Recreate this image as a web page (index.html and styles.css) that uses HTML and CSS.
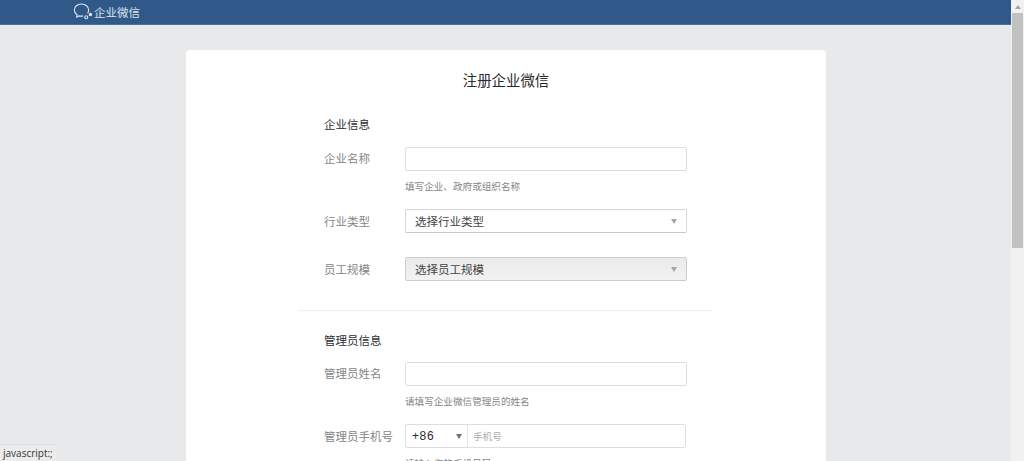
FILE: index.html
```html
<!DOCTYPE html>
<html lang="zh-CN">
<head>
<meta charset="utf-8">
<title>注册企业微信</title>
<link rel="stylesheet" href="styles.css">
</head>
<body>
<div class="app">
  <div class="page">
    <header class="topbar">
      <div class="brand">
        <svg class="logo" width="20" height="17" viewBox="0 0 20 17" fill="none" stroke="#dfe6ee" stroke-width="1.1">
          <path d="M14.6 10.4c.7-1 1.1-2.100 1.100-3.300C15.700 3.600 12.400 1 8.500 1S1.300 3.600 1.300 7.100c0 2 1.100 3.700 2.800 4.900l-.4 2.100 2.500-1.200c.6.100 1.200.2 1.800.2.700 0 1.400-.1 2-.2"/>
          <circle cx="13.200" cy="14.300" r="1.500"/>
          <circle cx="17.400" cy="11.600" r="1.200" fill="#dfe6ee"/>
        </svg>
        <span class="brand-name">企业微信</span>
      </div>
    </header>
    <main class="card">
      <h1 class="title">注册企业微信</h1>
      <div class="form">
        <section class="section section-first">
          <h2 class="section-title">企业信息</h2>
          <div class="row row-hint">
            <label class="label">企业名称</label>
            <div class="field"><div class="input"></div><p class="hint">填写企业、政府或组织名称</p></div>
          </div>
          <div class="row row-plain">
            <label class="label">行业类型</label>
            <div class="field"><div class="select"><span>选择行业类型</span><i class="caret"></i></div></div>
          </div>
          <div class="row">
            <label class="label">员工规模</label>
            <div class="field"><div class="select select-disabled"><span>选择员工规模</span><i class="caret"></i></div></div>
          </div>
        </section>
        <section class="section section-second">
          <h2 class="section-title">管理员信息</h2>
          <div class="row row-hint">
            <label class="label">管理员姓名</label>
            <div class="field"><div class="input"></div><p class="hint">请填写企业微信管理员的姓名</p></div>
          </div>
          <div class="row">
            <label class="label">管理员手机号</label>
            <div class="field">
              <div class="phone">
                <div class="code"><span class="code-value">+86</span><i class="caret caret-dark"></i></div>
                <div class="phone-input">手机号</div>
              </div>
              <p class="hint">请输入您的手机号码</p>
            </div>
          </div>
        </section>
      </div>
    </main>
  </div>
  <aside class="scrollbar">
    <div class="arrow"></div>
    <div class="thumb"></div>
  </aside>
</div>
<div class="status">javascript:;</div>
</body>
</html>
```
FILE: styles.css
```css
* { box-sizing: border-box; }
html, body { margin: 0; height: 100%; overflow: hidden; }
body {
  font-family: "Noto Sans CJK SC", "Liberation Sans", sans-serif;
  background: #e8e9eb;
  color: #333;
}
.app { display: flex; height: 461px; overflow: hidden; }
.page { flex: 1; min-width: 0; overflow: hidden; }
.topbar {
  height: 25px;
  background: #30598a;
  border-bottom: 1px solid #4b72a0;
  padding-left: 73px;
}
.brand { display: flex; align-items: center; height: 24px; gap: 1px; }
.logo { display: block; margin-top: -1px; }
.brand-name { font-size: 11.500px; line-height: 24px; color: #dce3ec; }
.card {
  width: 640px;
  margin: 25px 0 0 186px;
  height: 600px;
  background: #fff;
  border-radius: 4px;
  padding-top: 18px;
}
.title {
  margin: 0;
  font-size: 14.400px;
  line-height: 24px;
  font-weight: 400;
  color: #2b2b2b;
  text-align: center;
}
.form { width: 415px; margin: 0 0 0 112px; }
.section { padding-left: 26px; }
.section-first { padding-top: 23px; padding-bottom: 29px; border-bottom: 1px solid #eeeeee; }
.section-first .section-title { margin-bottom: 14px; }
.section-second { padding-top: 20px; }
.section-title {
  margin: 0 0 13px;
  font-size: 11.500px;
  line-height: 18px;
  font-weight: 400;
  color: #2e2e2e;
}
.row { display: flex; align-items: flex-start; }
.row-hint { margin-bottom: 16px; }
.row-plain { margin-bottom: 24px; }
.label {
  width: 81px;
  flex: none;
  font-size: 11.500px;
  line-height: 24px;
  color: #858585;
}
.row-hint .label { line-height: 22px; }
.field { width: 282px; }
.input {
  height: 24px;
  background: #fff;
  border: 1px solid #dedede;
  border-radius: 2px;
}
.hint {
  margin: 8px 0 0;
  font-size: 9.600px;
  line-height: 14px;
  color: #858585;
}
.select {
  display: flex;
  justify-content: space-between;
  align-items: center;
  height: 24px;
  padding: 0 9px;
  background: #fff;
  border: 1px solid #d6d6d6;
  border-bottom-color: #c8c8c8;
  border-radius: 2px;
  font-size: 11.500px;
  color: #444;
}
.select-disabled {
  background: linear-gradient(#ebebeb, #f2f2f2);
  border-color: #cccccc;
}
.caret {
  width: 0;
  height: 0;
  border-left: 3px solid transparent;
  border-right: 3px solid transparent;
  border-top: 5px solid #a5a5a5;
}
.caret-dark { border-top-color: #707070; }
.phone {
  display: flex;
  width: 281px;
  height: 24px;
  border: 1px solid #dedede;
  border-radius: 2px;
  background: #fff;
}
.code {
  width: 62px;
  flex: none;
  display: flex;
  justify-content: space-between;
  align-items: center;
  padding: 0 5px 0 6px;
  border-right: 1px solid #e6e6e6;
  font-family: "Liberation Sans", sans-serif;
  font-size: 12px;
  color: #2e2e2e;
}
.code-value { letter-spacing: 0.6px; }
.phone-input {
  padding-left: 5px;
  font-size: 9.600px;
  line-height: 22px;
  color: #adadad;
}
.scrollbar {
  width: 13px;
  flex: none;
  background: #f1f1f1;
  padding: 0 1px;
}
.arrow {
  width: 0;
  height: 0;
  margin: 5px auto 0;
  border-left: 3.500px solid transparent;
  border-right: 3.500px solid transparent;
  border-bottom: 4px solid #a3a3a3;
}
.thumb { height: 235px; margin-top: 4px; background: #c1c1c1; }
.status {
  position: fixed;
  left: 0;
  bottom: 0;
  width: 58px;
  height: 17px;
  padding-left: 3px;
  background: #ececec;
  border-top: 1px solid #e0e0e0;
  border-right: 1px solid #e4e4e4;
  border-top-right-radius: 3px;
  font-family: "Open Sans", "Liberation Sans", sans-serif;
  font-size: 10px;
  line-height: 17px;
  color: #333;
}
```
